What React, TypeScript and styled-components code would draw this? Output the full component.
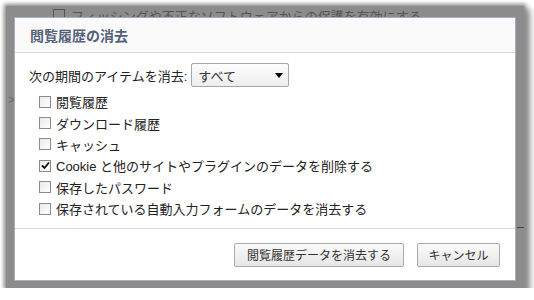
import React, { useState } from 'react';
import styled, { createGlobalStyle } from 'styled-components';

const GlobalStyle = createGlobalStyle`
    html, body {
        margin: 0;
        padding: 0;
        background: #ffffff;
    }
    body {
        font-family: "Liberation Sans", "Noto Sans CJK JP", sans-serif;
        font-size: 13px;
        color: #222;
    }
`;

// dimmed settings page behind the modal, with a soft drop shadow
const Frame = styled.div`
    position: relative;
    box-sizing: border-box;
    width: 518px;
    height: 282px;
    margin: 6px 0 0 6px;
    background: #8c8c8c;
    box-shadow: 0 0 4px 2px #8c8c8c, 4px 5px 6px 2px #8f8f8f;
    overflow: hidden;
`;

const PageLine = styled.div`
    display: flex;
    align-items: center;
    gap: 6px;
    height: 16px;
    padding: 0 0 0 47px;
    margin-top: 1px;
    color: #555;
    white-space: nowrap;
`;

const PageBox = styled.span`
    display: inline-flex;
    box-sizing: border-box;
    width: 12px;
    height: 12px;
    border: 1px solid #555;
`;

const PageChevron = styled.div`
    margin: 70px 0 0 2px;
    color: #666;
    font-size: 12px;
`;

const PageRule = styled.div`
    margin: 120px 0 0 511px;
    width: 20px;
    height: 1px;
    background: #444;
`;

const Dialog = styled.div`
    position: absolute;
    top: 11px;
    left: 8px;
    box-sizing: border-box;
    width: 502px;
    height: 264px;
    background: #fff;
    border: 1px solid #a9adc2;
    display: flex;
    flex-direction: column;
`;

const Header = styled.div`
    box-sizing: border-box;
    height: 35px;
    display: flex;
    align-items: center;
    padding: 0 15px;
    background: #fafafa;
    border-bottom: 1px solid #d7dae2;
`;

const Title = styled.h1`
    margin: 0;
    font-size: 14px;
    font-weight: bold;
    color: #53627a;
`;

const Content = styled.div`
    flex: 1;
    padding: 10px 14px 0 14px;
    display: flex;
    flex-direction: column;
`;

const PeriodRow = styled.div`
    display: flex;
    align-items: center;
    gap: 4px;
    height: 24px;
`;

const Select = styled.div`
    box-sizing: border-box;
    width: 98px;
    height: 24px;
    display: flex;
    align-items: center;
    justify-content: space-between;
    padding: 0 5px 0 6px;
    border: 1px solid #a6a6a6;
    border-radius: 2px;
    background: linear-gradient(#fdfdfd, #ededed);
    color: #333;
`;

const Arrow = styled.span`
    width: 0;
    height: 0;
    border-left: 4px solid transparent;
    border-right: 4px solid transparent;
    border-top: 5px solid #000;
`;

const Options = styled.div`
    display: flex;
    flex-direction: column;
    padding: 4px 0 0 10px;
`;

const OptionRow = styled.label`
    display: flex;
    align-items: center;
    gap: 5px;
    height: 21.4px;
    cursor: default;
`;

const Box = styled.span`
    box-sizing: border-box;
    width: 12px;
    height: 12px;
    border: 1px solid #8a8a8a;
    background: linear-gradient(135deg, #eaeaea, #fff);
    display: inline-flex;
    align-items: center;
    justify-content: center;
`;

const Footer = styled.div`
    box-sizing: border-box;
    height: 52px;
    border-top: 1px solid #dadada;
    display: flex;
    justify-content: flex-end;
    align-items: center;
    gap: 13px;
    padding: 0 15px 0 0;
`;

const Button = styled.button<{ $w: number }>`
    box-sizing: border-box;
    width: ${(props) => props.$w}px;
    height: 24px;
    padding: 0;
    font-family: "Liberation Sans", "Noto Sans CJK JP", sans-serif;
    font-size: 12px;
    color: #333;
    border: 1px solid #aaa;
    border-radius: 2px;
    background: linear-gradient(#fbfbfb, #e6e6e6);
`;

const items = [
    { label: '閲覧履歴', checked: false },
    { label: 'ダウンロード履歴', checked: false },
    { label: 'キャッシュ', checked: false },
    { label: 'Cookie と他のサイトやプラグインのデータを削除する', checked: true },
    { label: '保存したパスワード', checked: false },
    { label: '保存されている自動入力フォームのデータを消去する', checked: false },
];

const CheckMark = () => (
    <svg width="9" height="9" viewBox="0 0 9 9">
        <polyline points="1,4.5 3.5,7 8,1.5" fill="none" stroke="#111" strokeWidth="1.8" />
    </svg>
);

const App = () => {
    const [checks, setChecks] = useState(items.map((i) => i.checked));
    const toggle = (idx: number) => {
        setChecks((old) => old.map((v, i) => (i === idx ? !v : v)));
    };

    return (
        <>
            <GlobalStyle />
            <Frame>
                <PageLine>
                    <PageBox />
                    フィッシングや不正なソフトウェアからの保護を有効にする
                </PageLine>
                <PageChevron>&gt;</PageChevron>
                <PageRule />
                <Dialog>
                    <Header>
                        <Title>閲覧履歴の消去</Title>
                    </Header>
                    <Content>
                        <PeriodRow>
                            次の期間のアイテムを消去:
                            <Select>
                                すべて
                                <Arrow />
                            </Select>
                        </PeriodRow>
                        <Options>
                            {items.map((item, i) => (
                                <OptionRow key={item.label} onClick={() => toggle(i)}>
                                    <Box>{checks[i] ? <CheckMark /> : null}</Box>
                                    {item.label}
                                </OptionRow>
                            ))}
                        </Options>
                    </Content>
                    <Footer>
                        <Button $w={170}>閲覧履歴データを消去する</Button>
                        <Button $w={83}>キャンセル</Button>
                    </Footer>
                </Dialog>
            </Frame>
        </>
    );
};

export default App;
